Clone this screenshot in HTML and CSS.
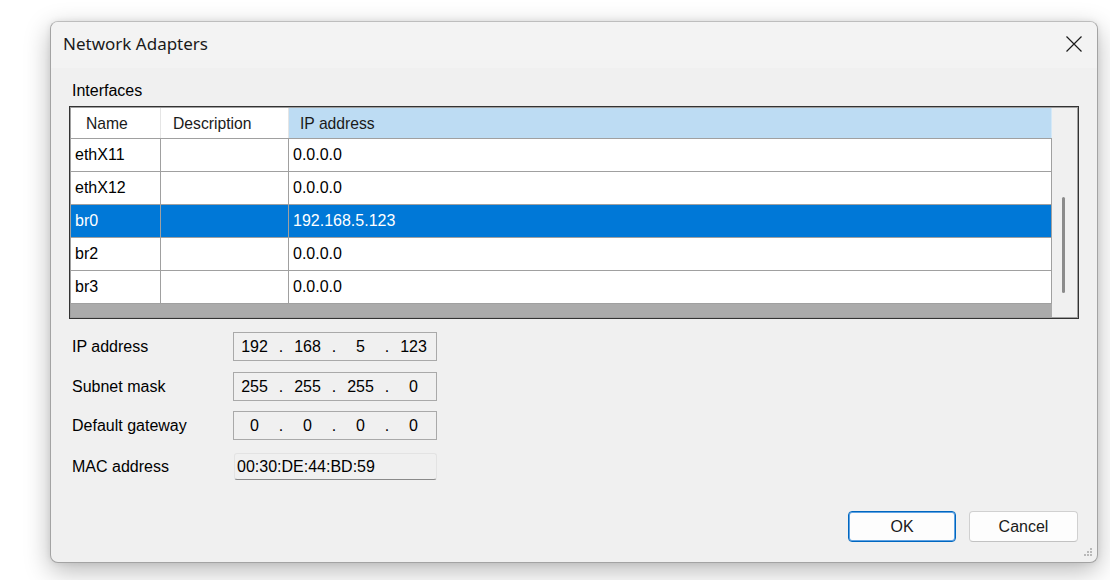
FILE: index.html
```html
<!DOCTYPE html>
<html>
<head>
<meta charset="utf-8">
<title>Network Adapters</title>
<link rel="stylesheet" href="styles.css">
</head>
<body>
<div class="window">
  <div class="titlebar">
    <span class="title">Network Adapters</span>
    <svg class="close" width="16" height="16" viewBox="0 0 16 16"><path d="M0.5 0.5 L15.5 15.5 M15.5 0.5 L0.5 15.5" stroke="#1b1b1b" stroke-width="1.2" fill="none"/></svg>
  </div>
  <div class="content">
    <div class="group-label">Interfaces</div>
    <div class="grid">
      <div class="grid-inner">
        <div class="data">
          <div class="row header">
            <div class="cell c1">Name</div>
            <div class="cell c2">Description</div>
            <div class="cell c3 sorted">IP address</div>
          </div>
          <div class="row">
            <div class="cell c1">ethX11</div>
            <div class="cell c2"></div>
            <div class="cell c3">0.0.0.0</div>
          </div>
          <div class="row">
            <div class="cell c1">ethX12</div>
            <div class="cell c2"></div>
            <div class="cell c3">0.0.0.0</div>
          </div>
          <div class="row selected">
            <div class="cell c1">br0</div>
            <div class="cell c2"></div>
            <div class="cell c3">192.168.5.123</div>
          </div>
          <div class="row">
            <div class="cell c1">br2</div>
            <div class="cell c2"></div>
            <div class="cell c3">0.0.0.0</div>
          </div>
          <div class="row">
            <div class="cell c1">br3</div>
            <div class="cell c2"></div>
            <div class="cell c3">0.0.0.0</div>
          </div>
          <div class="fill"></div>
        </div>
        <div class="vscroll"><div class="thumb"></div></div>
      </div>
    </div>

    <div class="form">
      <div class="field-row r1">
        <span class="label">IP address</span>
        <div class="ipbox"><span>192</span><span>.</span><span>168</span><span>.</span><span>5</span><span>.</span><span>123</span></div>
      </div>
      <div class="field-row r2">
        <span class="label">Subnet mask</span>
        <div class="ipbox"><span>255</span><span>.</span><span>255</span><span>.</span><span>255</span><span>.</span><span>0</span></div>
      </div>
      <div class="field-row r3">
        <span class="label">Default gateway</span>
        <div class="ipbox"><span>0</span><span>.</span><span>0</span><span>.</span><span>0</span><span>.</span><span>0</span></div>
      </div>
      <div class="field-row r4">
        <span class="label">MAC address</span>
        <div class="macbox">00:30:DE:44:BD:59</div>
      </div>
    </div>

    <div class="buttons">
      <button class="btn default">OK</button>
      <button class="btn">Cancel</button>
    </div>
  </div>
  <svg class="grip" width="10" height="10" viewBox="0 0 10 10">
    <rect x="7" y="0" width="2" height="2" fill="#b9b9b9"/>
    <rect x="4" y="3" width="2" height="2" fill="#b9b9b9"/>
    <rect x="7" y="3" width="2" height="2" fill="#b9b9b9"/>
    <rect x="1" y="6" width="2" height="2" fill="#b9b9b9"/>
    <rect x="4" y="6" width="2" height="2" fill="#b9b9b9"/>
    <rect x="7" y="6" width="2" height="2" fill="#b9b9b9"/>
  </svg>
</div>
</body>
</html>
```

FILE: styles.css
```css
* { box-sizing: border-box; }

html, body {
  margin: 0;
  padding: 0;
  background: #ffffff;
  width: 1110px;
  height: 580px;
  overflow: hidden;
}

body {
  font-family: "Liberation Sans", Arial, sans-serif;
  font-size: 16px;
  color: #000;
}

.window {
  position: relative;
  margin: 21px 0 0 50px;
  width: 1048px;
  height: 542px;
  border: 1px solid #a3a3a3;
  border-top-color: #bdbdbd;
  border-radius: 8px;
  background: #f0f0f0;
  box-shadow: 0 8px 26px rgba(0, 0, 0, 0.28), 0 0 6px rgba(0, 0, 0, 0.08);
  display: flex;
  flex-direction: column;
  overflow: hidden;
}

.titlebar {
  height: 46px;
  background: #f3f3f3;
  display: flex;
  align-items: center;
  justify-content: space-between;
  padding: 0 15px 0 12px;
  flex: none;
}

.title {
  font-family: "Noto Sans", "Open Sans", sans-serif;
  font-size: 17px;
  color: #1a1a1a;
  margin-top: -3px;
}

.close {
  display: block;
  margin-top: -2px;
}

.content {
  flex: 1;
  display: flex;
  flex-direction: column;
  padding: 14px 18px 0 18px;
}

.group-label {
  height: 18px;
  line-height: 18px;
  margin-left: 3px;
  margin-bottom: 6px;
}

.grid {
  border: 1px solid #333333;
  width: 1010px;
  height: 213px;
}

.grid-inner {
  border: 1px solid #a0a0a0;
  height: 100%;
  display: flex;
}

.data {
  width: 981px;
  display: flex;
  flex-direction: column;
  background: #ababab;
}

.row {
  display: flex;
  height: 33px;
  background: #ffffff;
  border-bottom: 1px solid #a0a0a0;
  flex: none;
}

.cell {
  display: flex;
  align-items: center;
  padding-left: 4px;
  border-right: 1px solid #a0a0a0;
  white-space: nowrap;
  overflow: hidden;
}

.c1 { width: 90px; }
.c2 { width: 128px; }
.c3 { width: 763px; }

.row.header {
  height: 31px;
  font-size: 15.7px;
  color: #1a1a1a;
}

.row.header .cell {
  border-right-color: #e5e5e5;
  padding-left: 12px;
  padding-top: 1px;
}

.row.header .c1 { padding-left: 15px; }

.row.header .cell.sorted {
  background: #bddcf3;
  border-right-color: #d4e8f7;
  padding-left: 11px;
}

.row.selected {
  background: #0078d7;
  color: #ffffff;
}

.fill {
  flex: 1;
  background: #ababab;
}

.vscroll {
  flex: 1;
  background: #f0f0f0;
  display: flex;
  justify-content: center;
  padding-top: 89px;
}

.thumb {
  width: 3px;
  height: 96px;
  border-radius: 2px;
  background: #8b8b8b;
  margin-left: -3px;
}

.form {
  margin-top: 13px;
  padding-left: 3px;
  display: flex;
  flex-direction: column;
}

.field-row {
  display: flex;
  align-items: center;
  height: 29px;
}

.field-row.r2 { margin-top: 11px; }
.field-row.r3 { margin-top: 10px; }
.field-row.r4 { margin-top: 13px; height: 27px; }

.label {
  width: 161px;
  color: #000;
}

.ipbox {
  width: 204px;
  height: 29px;
  border: 1px solid #a9a9a9;
  background: #f0f0f0;
  display: grid;
  grid-template-columns: 39px 14px 39px 14px 39px 14px 39px;
  align-items: center;
  justify-items: center;
  padding-left: 1px;
}

.macbox {
  width: 203px;
  height: 27px;
  margin-left: 1px;
  background: #f0f0f0;
  border: 1px solid #e3e3e3;
  border-bottom: 1px solid #8a8a8a;
  border-radius: 3px;
  padding-left: 2px;
  display: flex;
  align-items: center;
}

.buttons {
  margin-top: auto;
  margin-bottom: 20px;
  display: flex;
  justify-content: flex-end;
  gap: 13px;
  padding-right: 1px;
}

.btn {
  font-family: "Liberation Sans", Arial, sans-serif;
  font-size: 16px;
  color: #1a1a1a;
  width: 109px;
  height: 31px;
  background: #fdfdfd;
  border: 1px solid #d0d0d0;
  border-bottom-color: #c2c2c2;
  border-radius: 4px;
  padding: 0;
}

.btn.default {
  width: 108px;
  border: 1px solid #0067c0;
  box-shadow: inset 0 0 0 1px #5fa2e2;
}

.grip {
  position: absolute;
  right: 4px;
  bottom: 4px;
}
```
